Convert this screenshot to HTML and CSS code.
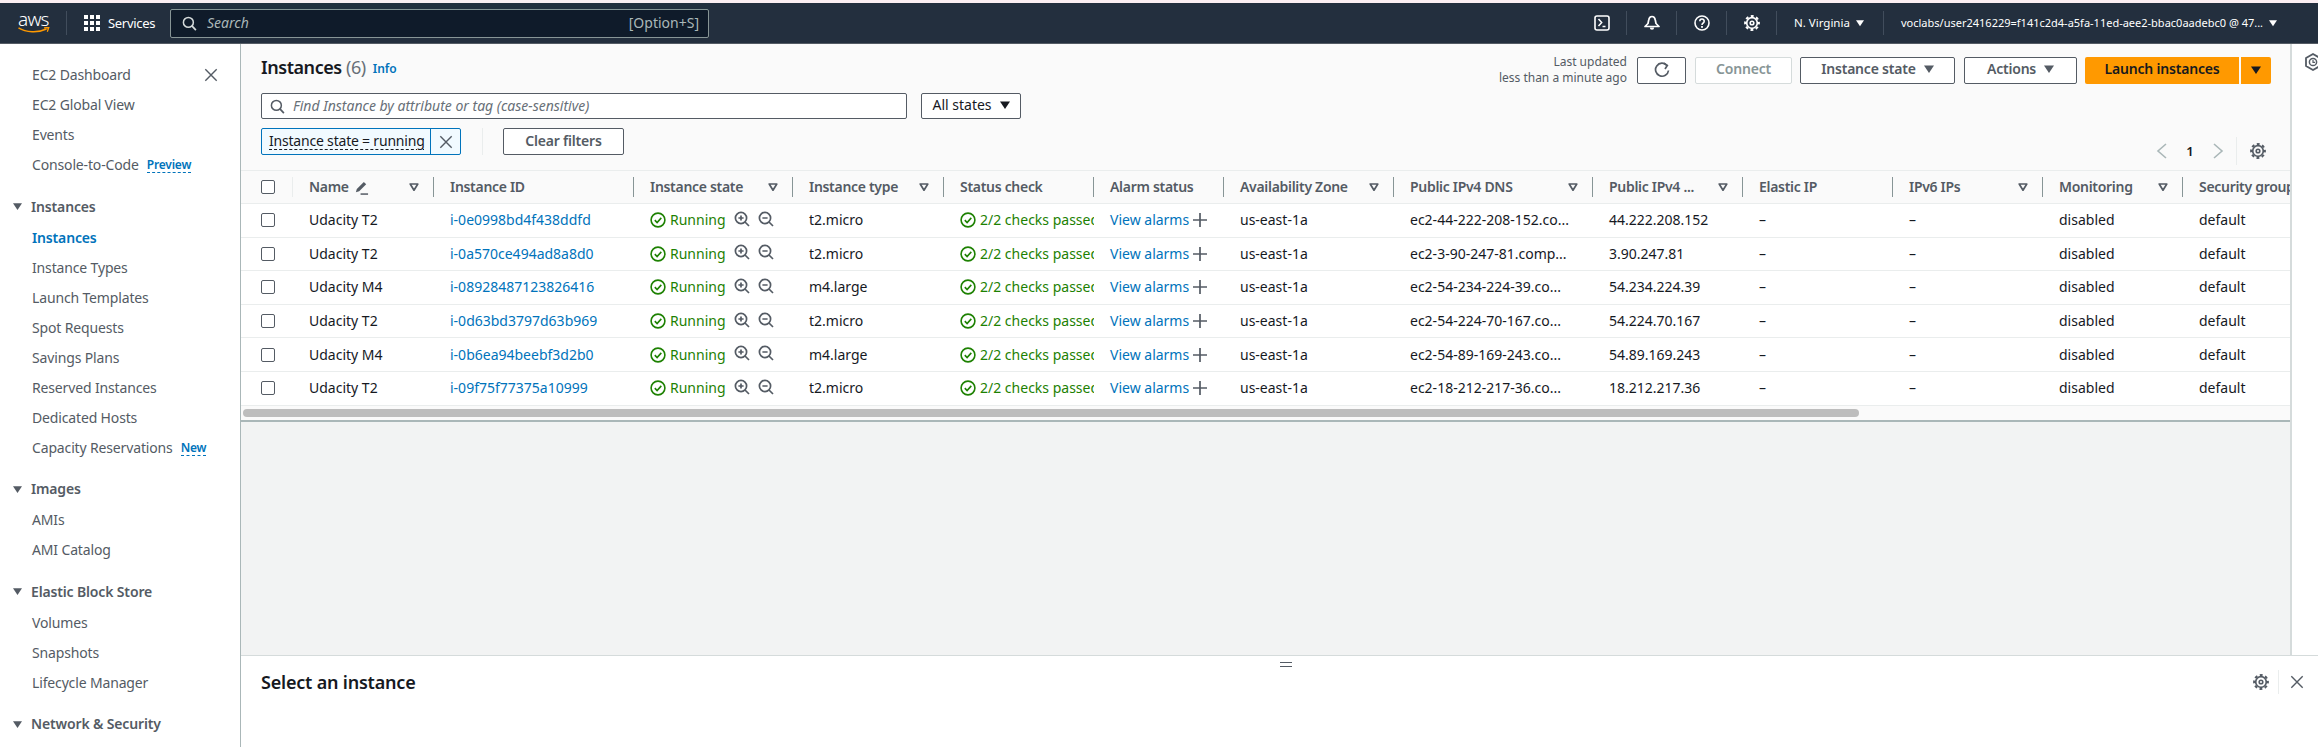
FILE: index.html
```html
<!DOCTYPE html>
<html lang="en">
<head>
    <meta charset="UTF-8">
    <title>Instances | EC2</title>
    <link rel="stylesheet" href="styles.css">
</head>
<body>
<svg class="defs" width="0" height="0">
    <symbol id="i-search" viewBox="0 0 16 16"><circle cx="6.8" cy="6.8" r="5.3" fill="none" stroke="currentColor" stroke-width="1.6"/><path d="M10.6 10.6l4.2 4.4" fill="none" stroke="currentColor" stroke-width="1.8"/></symbol>
    <symbol id="i-x" viewBox="0 0 16 16"><path d="M1.5 1.5l13 13M14.5 1.500l-13 13" fill="none" stroke="currentColor" stroke-width="1.6"/></symbol>
    <symbol id="i-gear" viewBox="0 0 16 16"><circle cx="8" cy="8" r="5.3" fill="none" stroke="currentColor" stroke-width="1.7"/><circle cx="8" cy="8" r="6.9" fill="none" stroke="currentColor" stroke-width="2" stroke-dasharray="2.9 2.52" stroke-dashoffset="1.45"/><circle cx="8" cy="8" r="1.8" fill="none" stroke="currentColor" stroke-width="1.6"/></symbol>
    <symbol id="i-ok" viewBox="0 0 16 16"><circle cx="8" cy="8" r="6.9" fill="none" stroke="currentColor" stroke-width="1.6"/><path d="M4.8 8.1l2.3 2.4 4.2-4.6" fill="none" stroke="currentColor" stroke-width="1.6"/></symbol>
    <symbol id="i-in" viewBox="0 0 16 16"><circle cx="7" cy="7" r="5.6" fill="none" stroke="currentColor" stroke-width="1.7"/><path d="M11 11l4 4M4.4 7h5.2M7 4.4v5.2" fill="none" stroke="currentColor" stroke-width="1.7"/></symbol>
    <symbol id="i-out" viewBox="0 0 16 16"><circle cx="7" cy="7" r="5.6" fill="none" stroke="currentColor" stroke-width="1.7"/><path d="M11 11l4 4M4.4 7h5.2" fill="none" stroke="currentColor" stroke-width="1.7"/></symbol>
    <symbol id="i-plus" viewBox="0 0 16 16"><path d="M8 1v14M1 8h14" fill="none" stroke="currentColor" stroke-width="1.7"/></symbol>
    <symbol id="i-sort" viewBox="0 0 10 10"><path d="M1.2 2h7.6L5 8.2z" fill="none" stroke="currentColor" stroke-width="1.7" stroke-linejoin="round"/></symbol>
    <symbol id="i-caret" viewBox="0 0 10 10"><path d="M0 1.5h10L5 9z" fill="currentColor"/></symbol>
    <symbol id="i-pen" viewBox="0 0 16 16"><path d="M2 13l1-3.500L10.500 2 13 4.500 5.500 12z" fill="currentColor"/><path d="M7 15h8" fill="none" stroke="currentColor" stroke-width="1.6"/></symbol>
    <symbol id="i-chev-l" viewBox="0 0 12 16"><path d="M10 1L2 8l8 7" fill="none" stroke="currentColor" stroke-width="1.6"/></symbol>
    <symbol id="i-chev-r" viewBox="0 0 12 16"><path d="M2 1l8 7-8 7" fill="none" stroke="currentColor" stroke-width="1.6"/></symbol>
</svg>

<div class="strip"></div>

<header class="topnav">
    <div class="aws-logo">
        <span class="aws-word">aws</span>
        <svg class="aws-smile" width="32" height="7" viewBox="0 0 32 7"><path d="M.5.8C8 5.500 20 6 28.500 2" fill="none" stroke="#f90" stroke-width="1.5"/><path d="M26 .8l4.800-.3-1.500 4.300" fill="none" stroke="#f90" stroke-width="1.3"/></svg>
    </div>
    <span class="nav-rule"></span>
    <svg class="grid-icon" width="16" height="16" viewBox="0 0 16 16" fill="#fff">
        <rect width="4" height="4"/><rect x="6" width="4" height="4"/><rect x="12" width="4" height="4"/>
        <rect y="6" width="4" height="4"/><rect x="6" y="6" width="4" height="4"/><rect x="12" y="6" width="4" height="4"/>
        <rect y="12" width="4" height="4"/><rect x="6" y="12" width="4" height="4"/><rect x="12" y="12" width="4" height="4"/>
    </svg>
    <span class="services">Services</span>
    <div class="nav-search">
        <svg width="15" height="15"><use href="#i-search"/></svg>
        <span class="nav-search-text">Search</span>
        <span class="nav-search-key">[Option+S]</span>
    </div>
    <div class="nav-right">
        <span class="nav-btn">
            <svg width="16" height="16" viewBox="0 0 16 16"><rect x="1" y="1" width="14" height="14" rx="2" fill="none" stroke="#fff" stroke-width="1.6"/><path d="M4.500 4l3.200 3.500L4.500 11M8.500 11.500h3" fill="none" stroke="#fff" stroke-width="1.5"/></svg>
        </span>
        <span class="nav-btn">
            <svg width="16" height="16" viewBox="0 0 16 16"><path d="M8 1.500c2 0 3 1.500 3.300 3.500l.7 3.500 3 3H1l3-3 .7-3.500C5 3 6 1.500 8 1.500z" fill="none" stroke="#fff" stroke-width="1.7" stroke-linejoin="round"/><path d="M5.800 12.500a2.200 2.200 0 0 0 4.400 0z" fill="#fff"/></svg>
        </span>
        <span class="nav-btn">
            <svg width="16" height="16" viewBox="0 0 16 16"><circle cx="8" cy="8" r="7" fill="none" stroke="#fff" stroke-width="1.6"/><path d="M5.800 6.200a2.200 2.200 0 1 1 3.400 1.800c-.8.500-1.200 1-1.200 2" fill="none" stroke="#fff" stroke-width="1.6"/><rect x="7.100" y="11" width="1.800" height="1.800" fill="#fff"/></svg>
        </span>
        <span class="nav-btn nav-gear"><svg width="16" height="16"><use href="#i-gear"/></svg></span>
        <span class="nav-menu nav-region">N. Virginia <svg width="8" height="8"><use href="#i-caret"/></svg></span>
        <span class="nav-menu nav-account">voclabs/user2416229=f141c2d4-a5fa-11ed-aee2-bbac0aadebc0 @ 47... <svg width="8" height="8"><use href="#i-caret"/></svg></span>
    </div>
</header>

<div class="layout">
    <nav class="sidebar">
        <ul class="side-list">
            <li>EC2 Dashboard <svg class="side-close" width="14" height="14"><use href="#i-x"/></svg></li>
            <li>EC2 Global View</li>
            <li>Events</li>
            <li>Console-to-Code <span class="side-tag">Preview</span></li>
        </ul>
        <h3 class="side-head"><svg width="9" height="9"><use href="#i-caret"/></svg>Instances</h3>
        <ul class="side-list">
            <li class="side-active">Instances</li>
            <li>Instance Types</li>
            <li>Launch Templates</li>
            <li>Spot Requests</li>
            <li>Savings Plans</li>
            <li>Reserved Instances</li>
            <li>Dedicated Hosts</li>
            <li>Capacity Reservations <span class="side-tag">New</span></li>
        </ul>
        <h3 class="side-head"><svg width="9" height="9"><use href="#i-caret"/></svg>Images</h3>
        <ul class="side-list">
            <li>AMIs</li>
            <li>AMI Catalog</li>
        </ul>
        <h3 class="side-head"><svg width="9" height="9"><use href="#i-caret"/></svg>Elastic Block Store</h3>
        <ul class="side-list">
            <li>Volumes</li>
            <li>Snapshots</li>
            <li>Lifecycle Manager</li>
        </ul>
        <h3 class="side-head"><svg width="9" height="9"><use href="#i-caret"/></svg>Network &amp; Security</h3>
    </nav>

    <main class="content">
        <div class="upper">
            <section class="list-panel">
                <div class="list-head">
                    <div class="head-left">
                        <div class="title-row">
                            <h1 class="title">Instances <span class="count">(6)</span></h1>
                            <span class="info">Info</span>
                        </div>
                        <div class="search-row">
                            <div class="filter-input">
                                <svg width="15" height="15"><use href="#i-search"/></svg>
                                <span>Find Instance by attribute or tag (case-sensitive)</span>
                            </div>
                            <button class="btn btn-states">All states <svg width="10" height="10"><use href="#i-caret"/></svg></button>
                        </div>
                        <div class="token-row">
                            <div class="token">
                                <span class="token-text">Instance state = running</span>
                                <span class="token-x"><svg width="14" height="14"><use href="#i-x"/></svg></span>
                            </div>
                            <span class="token-rule"></span>
                            <button class="btn btn-clear">Clear filters</button>
                        </div>
                    </div>
                    <div class="head-right">
                        <div class="actions">
                            <div class="updated">Last updated<br>less than a minute ago</div>
                            <button class="btn btn-refresh">
                                <svg width="16" height="16" viewBox="0 0 16 16"><path d="M13 3.500A6.500 6.500 0 1 0 14.500 8.500" fill="none" stroke="currentColor" stroke-width="1.7"/><path d="M9.500 1l3.800 2.500L11 7" fill="none" stroke="currentColor" stroke-width="1.7"/></svg>
                            </button>
                            <button class="btn btn-connect">Connect</button>
                            <button class="btn btn-state">Instance state <svg width="10" height="10"><use href="#i-caret"/></svg></button>
                            <button class="btn btn-actions">Actions <svg width="10" height="10"><use href="#i-caret"/></svg></button>
                            <div class="launch">
                                <button class="btn-launch">Launch instances</button>
                                <button class="btn-launch btn-launch-more"><svg width="10" height="10"><use href="#i-caret"/></svg></button>
                            </div>
                        </div>
                        <div class="pager">
                            <svg class="chev" width="12" height="16"><use href="#i-chev-l"/></svg>
                            <span class="page-no">1</span>
                            <svg class="chev" width="12" height="16"><use href="#i-chev-r"/></svg>
                            <span class="pager-rule"></span>
                            <svg class="pager-gear" width="16" height="16"><use href="#i-gear"/></svg>
                        </div>
                    </div>
                </div>

                <div class="table">
                    <div class="row row-head">
                        <div class="th th-check"><span class="check"></span></div>
                        <div class="th"><span>Name</span><svg class="pen" width="15" height="15"><use href="#i-pen"/></svg><svg class="sort" width="10" height="10"><use href="#i-sort"/></svg></div>
                        <div class="th"><span>Instance ID</span></div>
                        <div class="th"><span>Instance state</span><svg class="sort" width="10" height="10"><use href="#i-sort"/></svg></div>
                        <div class="th"><span>Instance type</span><svg class="sort" width="10" height="10"><use href="#i-sort"/></svg></div>
                        <div class="th"><span>Status check</span></div>
                        <div class="th"><span>Alarm status</span></div>
                        <div class="th"><span>Availability Zone</span><svg class="sort" width="10" height="10"><use href="#i-sort"/></svg></div>
                        <div class="th"><span>Public IPv4 DNS</span><svg class="sort" width="10" height="10"><use href="#i-sort"/></svg></div>
                        <div class="th"><span>Public IPv4 ...</span><svg class="sort" width="10" height="10"><use href="#i-sort"/></svg></div>
                        <div class="th"><span>Elastic IP</span></div>
                        <div class="th"><span>IPv6 IPs</span><svg class="sort" width="10" height="10"><use href="#i-sort"/></svg></div>
                        <div class="th"><span>Monitoring</span><svg class="sort" width="10" height="10"><use href="#i-sort"/></svg></div>
                        <div class="th"><span>Security group name</span></div>
                    </div>

                    <div class="row">
                        <div class="td td-check"><span class="check"></span></div>
                        <div class="td">Udacity T2</div>
                        <div class="td"><a class="link">i-0e0998bd4f438ddfd</a></div>
                        <div class="td"><span class="ok"><svg width="16" height="16"><use href="#i-ok"/></svg>Running</span><svg class="zoom zoom-first" width="16" height="16"><use href="#i-in"/></svg><svg class="zoom" width="16" height="16"><use href="#i-out"/></svg></div>
                        <div class="td">t2.micro</div>
                        <div class="td td-clip"><span class="ok"><svg width="16" height="16"><use href="#i-ok"/></svg>2/2 checks passed</span></div>
                        <div class="td"><a class="link">View alarms</a><svg class="plus" width="16" height="16"><use href="#i-plus"/></svg></div>
                        <div class="td">us-east-1a</div>
                        <div class="td">ec2-44-222-208-152.co...</div>
                        <div class="td">44.222.208.152</div>
                        <div class="td">–</div>
                        <div class="td">–</div>
                        <div class="td">disabled</div>
                        <div class="td">default</div>
                    </div>
                    <div class="row">
                        <div class="td td-check"><span class="check"></span></div>
                        <div class="td">Udacity T2</div>
                        <div class="td"><a class="link">i-0a570ce494ad8a8d0</a></div>
                        <div class="td"><span class="ok"><svg width="16" height="16"><use href="#i-ok"/></svg>Running</span><svg class="zoom zoom-first" width="16" height="16"><use href="#i-in"/></svg><svg class="zoom" width="16" height="16"><use href="#i-out"/></svg></div>
                        <div class="td">t2.micro</div>
                        <div class="td td-clip"><span class="ok"><svg width="16" height="16"><use href="#i-ok"/></svg>2/2 checks passed</span></div>
                        <div class="td"><a class="link">View alarms</a><svg class="plus" width="16" height="16"><use href="#i-plus"/></svg></div>
                        <div class="td">us-east-1a</div>
                        <div class="td">ec2-3-90-247-81.comp...</div>
                        <div class="td">3.90.247.81</div>
                        <div class="td">–</div>
                        <div class="td">–</div>
                        <div class="td">disabled</div>
                        <div class="td">default</div>
                    </div>
                    <div class="row">
                        <div class="td td-check"><span class="check"></span></div>
                        <div class="td">Udacity M4</div>
                        <div class="td"><a class="link">i-08928487123826416</a></div>
                        <div class="td"><span class="ok"><svg width="16" height="16"><use href="#i-ok"/></svg>Running</span><svg class="zoom zoom-first" width="16" height="16"><use href="#i-in"/></svg><svg class="zoom" width="16" height="16"><use href="#i-out"/></svg></div>
                        <div class="td">m4.large</div>
                        <div class="td td-clip"><span class="ok"><svg width="16" height="16"><use href="#i-ok"/></svg>2/2 checks passed</span></div>
                        <div class="td"><a class="link">View alarms</a><svg class="plus" width="16" height="16"><use href="#i-plus"/></svg></div>
                        <div class="td">us-east-1a</div>
                        <div class="td">ec2-54-234-224-39.co...</div>
                        <div class="td">54.234.224.39</div>
                        <div class="td">–</div>
                        <div class="td">–</div>
                        <div class="td">disabled</div>
                        <div class="td">default</div>
                    </div>
                    <div class="row">
                        <div class="td td-check"><span class="check"></span></div>
                        <div class="td">Udacity T2</div>
                        <div class="td"><a class="link">i-0d63bd3797d63b969</a></div>
                        <div class="td"><span class="ok"><svg width="16" height="16"><use href="#i-ok"/></svg>Running</span><svg class="zoom zoom-first" width="16" height="16"><use href="#i-in"/></svg><svg class="zoom" width="16" height="16"><use href="#i-out"/></svg></div>
                        <div class="td">t2.micro</div>
                        <div class="td td-clip"><span class="ok"><svg width="16" height="16"><use href="#i-ok"/></svg>2/2 checks passed</span></div>
                        <div class="td"><a class="link">View alarms</a><svg class="plus" width="16" height="16"><use href="#i-plus"/></svg></div>
                        <div class="td">us-east-1a</div>
                        <div class="td">ec2-54-224-70-167.co...</div>
                        <div class="td">54.224.70.167</div>
                        <div class="td">–</div>
                        <div class="td">–</div>
                        <div class="td">disabled</div>
                        <div class="td">default</div>
                    </div>
                    <div class="row">
                        <div class="td td-check"><span class="check"></span></div>
                        <div class="td">Udacity M4</div>
                        <div class="td"><a class="link">i-0b6ea94beebf3d2b0</a></div>
                        <div class="td"><span class="ok"><svg width="16" height="16"><use href="#i-ok"/></svg>Running</span><svg class="zoom zoom-first" width="16" height="16"><use href="#i-in"/></svg><svg class="zoom" width="16" height="16"><use href="#i-out"/></svg></div>
                        <div class="td">m4.large</div>
                        <div class="td td-clip"><span class="ok"><svg width="16" height="16"><use href="#i-ok"/></svg>2/2 checks passed</span></div>
                        <div class="td"><a class="link">View alarms</a><svg class="plus" width="16" height="16"><use href="#i-plus"/></svg></div>
                        <div class="td">us-east-1a</div>
                        <div class="td">ec2-54-89-169-243.co...</div>
                        <div class="td">54.89.169.243</div>
                        <div class="td">–</div>
                        <div class="td">–</div>
                        <div class="td">disabled</div>
                        <div class="td">default</div>
                    </div>
                    <div class="row">
                        <div class="td td-check"><span class="check"></span></div>
                        <div class="td">Udacity T2</div>
                        <div class="td"><a class="link">i-09f75f77375a10999</a></div>
                        <div class="td"><span class="ok"><svg width="16" height="16"><use href="#i-ok"/></svg>Running</span><svg class="zoom zoom-first" width="16" height="16"><use href="#i-in"/></svg><svg class="zoom" width="16" height="16"><use href="#i-out"/></svg></div>
                        <div class="td">t2.micro</div>
                        <div class="td td-clip"><span class="ok"><svg width="16" height="16"><use href="#i-ok"/></svg>2/2 checks passed</span></div>
                        <div class="td"><a class="link">View alarms</a><svg class="plus" width="16" height="16"><use href="#i-plus"/></svg></div>
                        <div class="td">us-east-1a</div>
                        <div class="td">ec2-18-212-217-36.co...</div>
                        <div class="td">18.212.217.36</div>
                        <div class="td">–</div>
                        <div class="td">–</div>
                        <div class="td">disabled</div>
                        <div class="td">default</div>
                    </div>
                </div>
                <div class="scrollbar"><div class="scroll-thumb"></div></div>
                <div class="list-empty"></div>
            </section>
            <aside class="rail">
                <svg class="rail-icon" width="18" height="18" viewBox="0 0 18 18"><path d="M9 1l7 4v8l-7 4-7-4V5z" fill="none" stroke="#545b64" stroke-width="1.8" stroke-linejoin="round"/><circle cx="9" cy="9" r="3.600" fill="none" stroke="#545b64" stroke-width="1.5"/><path d="M9 7v2.300h2" fill="none" stroke="#545b64" stroke-width="1.2"/></svg>
            </aside>
        </div>

        <section class="detail">
            <div class="detail-handle"><span></span></div>
            <div class="detail-head">
                <h2 class="detail-title">Select an instance</h2>
                <div class="detail-tools">
                    <svg width="16" height="16"><use href="#i-gear"/></svg>
                    <span class="detail-rule"></span>
                    <svg width="14" height="14"><use href="#i-x"/></svg>
                </div>
            </div>
        </section>
    </main>
</div>
</body>
</html>
```

FILE: styles.css
```css
* { margin: 0; padding: 0; box-sizing: border-box; }
html, body { height: 100%; overflow: hidden; }
body { font: 14px/20px "Noto Sans", "Liberation Sans", sans-serif; color: #16191f; background: #fff; display: flex; flex-direction: column; }
ul { list-style: none; }
button { font: inherit; cursor: pointer; }
.defs { position: absolute; }

.strip { height: 3px; background: #fbeef2; flex: none; }

/* top nav */
.topnav { height: 41px; flex: none; background: #232f3e; border-bottom: 1px solid #545b64; color: #fff; display: flex; align-items: center; padding-left: 18px; }
.aws-logo { width: 32px; display: flex; flex-direction: column; }
.aws-word { font-size: 19px; line-height: 15px; letter-spacing: -.8px; height: 15px; font-weight: 300; }
.aws-smile { display: block; }
.nav-rule { width: 1px; height: 24px; background: #414d5c; margin: 0 17px 0 16px; }
.services { font-size: 13px; margin-left: 8px; width: 62px; letter-spacing: -.3px; }
.nav-search { width: 539px; height: 29px; background: #0f1b2a; border: 1px solid #879596; border-radius: 2px; display: flex; align-items: center; padding: 0 9px 0 11px; color: #d5dbdb; }
.nav-search-text { font-size: 14px; font-style: italic; margin-left: 10px; color: #aab7b8; }
.nav-search-key { font-size: 14px; margin-left: auto; color: #aab7b8; }
.nav-right { margin-left: auto; display: flex; align-items: center; height: 24px; }
.nav-btn { width: 50px; height: 24px; border-right: 1px solid #414d5c; display: flex; align-items: center; justify-content: center; color: #fff; }
.nav-menu { font-size: 11px; display: flex; align-items: center; gap: 6px; white-space: nowrap; height: 24px; }
.nav-region { width: 107px; padding-left: 17px; border-right: 1px solid #414d5c; font-size: 11.5px; }
.nav-account { width: 434px; padding-left: 17px; }

.layout { flex: 1; display: flex; min-height: 0; }

/* side navigation */
.sidebar { width: 241px; flex: none; border-right: 1px solid #aab7b8; padding-top: 16px; overflow: hidden; color: #545b64; }
.side-list li { height: 30px; line-height: 30px; padding-left: 32px; white-space: nowrap; display: flex; align-items: center; letter-spacing: -.15px; }
.side-close { margin-left: auto; margin-right: 22px; color: #545b64; }
.side-tag { font-size: 12px; font-weight: 600; color: #0073bb; border-bottom: 1px dashed #0073bb; line-height: 15px; margin-left: 8px; letter-spacing: -.2px; }
.side-active { color: #0073bb; font-weight: 600; }
.side-head { font-size: 14px; font-weight: 600; height: 30px; line-height: 30px; margin: 11.5px 0 1px; padding-left: 13px; display: flex; align-items: center; gap: 9px; white-space: nowrap; letter-spacing: -.15px; }

/* instances list */
.content { flex: 1; min-width: 0; display: flex; flex-direction: column; }
.upper { flex: 1; min-height: 0; display: flex; }
.list-panel { flex: 1; min-width: 0; background: #f2f3f3; display: flex; flex-direction: column; overflow: hidden; }
.rail { width: 28px; flex: none; background: #fff; border-left: 2px solid #d5dbdb; overflow: hidden; padding: 9px 0 0 12px; }
.rail-icon { display: block; }

.list-head { height: 126px; flex: none; background: #fafafa; padding: 10px 19px 0 20px; display: flex; justify-content: space-between; }
.title-row { height: 27px; display: flex; align-items: center; gap: 7px; }
.title { font-size: 18px; line-height: 27px; font-weight: 600; white-space: nowrap; letter-spacing: -.45px; }
.count { font-weight: 400; color: #687078; }
.info { font-size: 12px; font-weight: 600; color: #0073bb; padding-top: 3px; }
.search-row { display: flex; gap: 14px; margin-top: 12px; }
.filter-input { width: 646px; height: 26px; background: #fff; border: 1px solid #545b64; border-radius: 2px; display: flex; align-items: center; gap: 8px; padding-left: 8px; color: #545b64; }
.filter-input span { font-style: italic; color: #687078; }

.btn { height: 27px; background: #fff; border: 1px solid #545b64; border-radius: 2px; color: #545b64; font-weight: 600; letter-spacing: -.2px; display: flex; align-items: center; justify-content: center; gap: 8px; white-space: nowrap; padding-bottom: 2px; }
.btn-states { width: 100px; height: 26px; font-weight: 400; color: #16191f; letter-spacing: 0; }
.token-row { display: flex; align-items: center; margin-top: 9px; }
.token { width: 200px; height: 27px; background: #f1faff; border: 1px solid #0073bb; border-radius: 2px; display: flex; }
.token-text { flex: 1; padding-left: 7px; white-space: nowrap; line-height: 24px; height: 24px; letter-spacing: -.2px; text-decoration: underline dashed; text-underline-offset: 3px; text-decoration-thickness: 1px; }
.token-x { width: 30px; border-left: 1px solid #0073bb; display: flex; align-items: center; justify-content: center; color: #545b64; }
.token-rule { width: 1px; height: 27px; background: #eaeded; margin: 0 20px 0 21px; }
.btn-clear { width: 121px; }

.head-right { display: flex; flex-direction: column; align-items: flex-end; }
.actions { display: flex; align-items: center; }
.updated { font-size: 12px; line-height: 16px; color: #545b64; text-align: right; margin-right: 10px; white-space: nowrap; }
.btn-refresh { width: 49px; margin-right: 9px; padding-bottom: 0; }
.btn-connect { width: 97px; margin-right: 8px; border-color: #d5dbdb; color: #879596; }
.btn-state { width: 155px; margin-right: 9px; }
.btn-actions { width: 113px; margin-right: 8px; }
.launch { display: flex; gap: 2px; }
.btn-launch { height: 27px; width: 154px; background: #f90; border: 0; border-radius: 2px 0 0 2px; color: #16191f; font-weight: 600; letter-spacing: -.2px; white-space: nowrap; padding-bottom: 2px; }
.btn-launch-more { width: 30px; border-radius: 0 2px 2px 0; display: flex; align-items: center; justify-content: center; padding-bottom: 0; }
.pager { height: 28px; margin-top: 51px; padding-right: 5px; display: flex; align-items: center; }
.chev { color: #aab7b8; }
.page-no { width: 44px; text-align: center; font-weight: 600; font-size: 13px; }
.pager-rule { width: 1px; height: 28px; background: #eaeded; margin: 0 13px 0 12px; }
.pager-gear { color: #545b64; }

/* table */
.table { flex: none; overflow: hidden; background: #fff; border-top: 1px solid #eaeded; }
.row { display: grid; grid-template-columns: 52px 141px 200px 159px 151px 150px 130px 170px 199px 150px 150px 150px 140px 150px; width: 2092px; height: 33.6px; border-bottom: 1px solid #eaeded; align-items: center; white-space: nowrap; }
.row-head { height: 33px; background: #fafafa; }
.th { height: 20px; border-right: 1px solid #879596; padding: 0 14px 0 16px; display: flex; align-items: center; font-weight: 600; letter-spacing: -.3px; color: #545b64; overflow: hidden; }
.th-check { padding-left: 20px; border-right-color: #eaeded; }
.th:last-child { border-right: 0; }
.sort { margin-left: auto; color: #545b64; flex: none; }
.pen { margin-left: 5px; color: #545b64; flex: none; }
.td { padding-left: 16px; overflow: hidden; display: flex; align-items: center; height: 100%; }
.td-check { padding-left: 20px; }
.check { width: 14px; height: 14px; border: 1px solid #545b64; border-radius: 2px; background: #fff; display: block; flex: none; }
.link { color: #0073bb; }
.ok { color: #1d8102; display: flex; align-items: center; gap: 4px; }
.zoom { color: #545b64; margin-left: 8px; flex: none; margin-top: -3px; }
.zoom-first { margin-left: 8px; }
.plus { color: #545b64; margin-left: 3px; flex: none; }

.scrollbar { height: 16px; flex: none; background: #fafafa; border-bottom: 2px solid #aab7b8; padding: 3px 0 0 2px; }
.scroll-thumb { width: 1616px; height: 8px; border-radius: 4px; background: #bdbdbd; }
.list-empty { flex: 1; }

/* detail panel */
.detail { height: 92px; flex: none; background: #fff; border-top: 1px solid #d5dbdb; }
.detail-handle { height: 17px; display: flex; align-items: center; padding-left: 1039px; }
.detail-handle span { width: 12px; height: 5px; border-top: 1px solid #545b64; border-bottom: 1px solid #545b64; }
.detail-head { display: flex; align-items: center; justify-content: space-between; padding: 0 14px 0 20px; height: 18px; }
.detail-title { font-size: 18px; font-weight: 600; white-space: nowrap; letter-spacing: -.2px; }
.detail-tools { display: flex; align-items: center; color: #545b64; }
.detail-rule { width: 1px; height: 24px; background: #eaeded; margin: 0 11px 0 9px; }
```
